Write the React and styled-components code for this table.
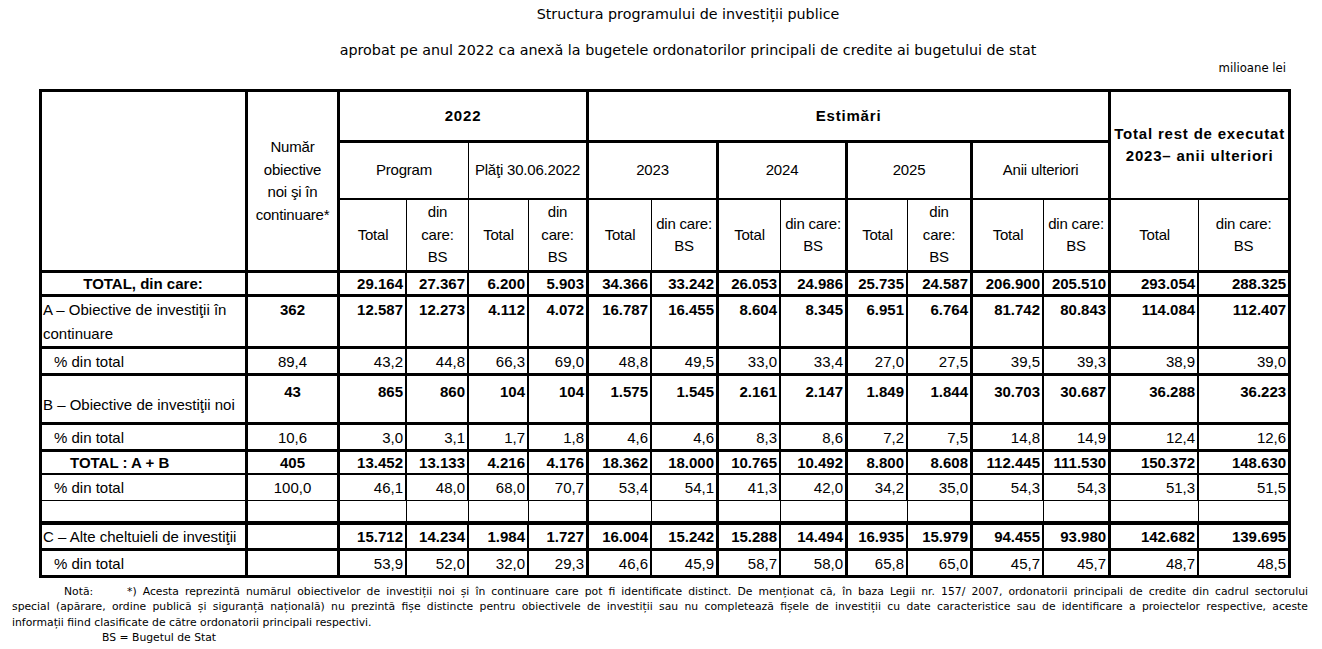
import React from 'react'
import styled, { createGlobalStyle } from 'styled-components'

const GlobalStyle = createGlobalStyle`
  html, body { margin: 0; padding: 0; background: #fff; color: #000; }
`

const Page = styled.div`
  width: 1322px;
  height: 649px;
  overflow: hidden;
`

const Title = styled.div`
  font-family: "DejaVu Sans", sans-serif;
  font-size: 14.3px;
  line-height: 18px;
  text-align: center;
  padding-left: 54px;
  margin-top: ${p => p.$mt}px;
  white-space: nowrap;
`

const Unit = styled.div`
  font-family: "Liberation Sans Narrow", "DejaVu Sans Condensed", sans-serif;
  font-size: 13px;
  line-height: 16px;
  text-align: right;
  padding-right: 36px;
  margin-top: 1px;
`

const Table = styled.table`
  margin: 13px 0 0 39px;
  width: 1252px;
  table-layout: fixed;
  border-collapse: separate;
  border-spacing: 0;
  border-top: 3px solid #000;
  border-left: 3px solid #000;
  font-family: "Liberation Sans", Arial, sans-serif;
  font-size: 15px;
`

const Row = styled.tr`
  height: ${p => p.$h}px;
`

const Head = styled.td`
  box-sizing: border-box;
  border-right: ${p => p.$r}px solid #000;
  border-bottom: ${p => p.$b}px solid #000;
  padding: 0 2px;
  text-align: center;
  vertical-align: middle;
  line-height: 22.5px;
  font-weight: ${p => (p.$bold ? 700 : 400)};
  letter-spacing: ${p => (p.$bold ? '0.8px' : '-0.2px')};
  white-space: nowrap;
  overflow: hidden;
`

const Cell = styled.td`
  box-sizing: border-box;
  border-right: ${p => p.$r}px solid #000;
  border-bottom: ${p => p.$b}px solid #000;
  padding: ${p => p.$pt || 0}px 2px 0 ${p => p.$pl ?? 2}px;
  text-align: ${p => p.$align || 'right'};
  vertical-align: ${p => p.$valign || 'middle'};
  font-weight: ${p => (p.$bold ? 700 : 400)};
  line-height: ${p => p.$lh || 21}px;
  white-space: nowrap;
  overflow: hidden;
`

const Notes = styled.div`
  margin-top: 6px;
  font-family: "DejaVu Sans", sans-serif;
  font-size: 10.8px;
  line-height: 15.3px;
  padding-right: 14px;
`

const NoteLine = styled.div`
  padding-left: ${p => p.$indent}px;
  white-space: nowrap;
  text-align: ${p => (p.$justify ? 'justify' : 'left')};
  text-align-last: ${p => (p.$justify ? 'justify' : 'left')};
`

const NoteTag = styled.span`
  display: inline-block;
  width: 63px;
`

const widths = [206, 92, 67, 62, 60, 60, 63, 67, 62, 67, 60, 65, 71, 67, 88, 92]
const bodyRight = [3, 3, 2, 2, 2, 3, 2, 3, 2, 3, 2, 3, 2, 3, 2, 3]
const thinRight = [3, 3, 1, 1, 1, 3, 1, 3, 1, 3, 1, 3, 1, 3, 1, 3]

const pairs = [
  { name: 'Program', r: 1, bs: ['din', 'care:', 'BS'] },
  { name: 'Plăţi 30.06.2022', r: 3, bs: ['din', 'care:', 'BS'] },
  { name: '2023', r: 3, bs: ['din care:', 'BS'] },
  { name: '2024', r: 3, bs: ['din care:', 'BS'] },
  { name: '2025', r: 3, bs: ['din', 'care:', 'BS'] },
  { name: 'Anii ulteriori', r: 3, bs: ['din care:', 'BS'] },
]

const rows = [
  {
    label: ['TOTAL, din care:'], labelAlign: 'center', bold: true, h: 24, b: 3, n: '',
    vals: ['29.164', '27.367', '6.200', '5.903', '34.366', '33.242', '26.053', '24.986', '25.735', '24.587', '206.900', '205.510', '293.054', '288.325'],
  },
  {
    label: ['A – Obiective de investiţii în', 'continuare'], bold: true, h: 52, b: 3, n: '362',
    valign: 'top', labelValign: 'top', lh: 24, pt: 1, labelPt: 1,
    vals: ['12.587', '12.273', '4.112', '4.072', '16.787', '16.455', '8.604', '8.345', '6.951', '6.764', '81.742', '80.843', '114.084', '112.407'],
  },
  {
    label: ['% din total'], pl: 12, h: 27, b: 3, n: '89,4',
    vals: ['43,2', '44,8', '66,3', '69,0', '48,8', '49,5', '33,0', '33,4', '27,0', '27,5', '39,5', '39,3', '38,9', '39,0'],
  },
  {
    label: ['B – Obiective de investiţii noi'], bold: true, h: 49, b: 3, n: '43',
    valign: 'top', pt: 5, labelPt: 10,
    vals: ['865', '860', '104', '104', '1.575', '1.545', '2.161', '2.147', '1.849', '1.844', '30.703', '30.687', '36.288', '36.223'],
  },
  {
    label: ['% din total'], pl: 12, h: 27, b: 3, n: '10,6',
    vals: ['3,0', '3,1', '1,7', '1,8', '4,6', '4,6', '8,3', '8,6', '7,2', '7,5', '14,8', '14,9', '12,4', '12,6'],
  },
  {
    label: ['TOTAL : A + B'], labelBold: true, pl: 28, bold: true, h: 23, b: 2, n: '405',
    vals: ['13.452', '13.133', '4.216', '4.176', '18.362', '18.000', '10.765', '10.492', '8.800', '8.608', '112.445', '111.530', '150.372', '148.630'],
  },
  {
    label: ['% din total'], pl: 12, h: 26, b: 1, n: '100,0',
    vals: ['46,1', '48,0', '68,0', '70,7', '53,4', '54,1', '41,3', '42,0', '34,2', '35,0', '54,3', '54,3', '51,3', '51,5'],
  },
  { label: [''], h: 24, b: 4, n: '', thin: true, vals: Array(14).fill('') },
  {
    label: ['C – Alte cheltuieli de investiţii'], bold: true, h: 26, b: 3, n: '',
    vals: ['15.712', '14.234', '1.984', '1.727', '16.004', '15.242', '15.288', '14.494', '16.935', '15.979', '94.455', '93.980', '142.682', '139.695'],
  },
  {
    label: ['% din total'], pl: 12, h: 27, b: 3, n: '',
    vals: ['53,9', '52,0', '32,0', '29,3', '46,6', '45,9', '58,7', '58,0', '65,8', '65,0', '45,7', '45,7', '48,7', '48,5'],
  },
]

const Lines = ({ items }) =>
  items.map((t, i) => (
    <React.Fragment key={i}>
      {i > 0 && <br />}
      {t}
    </React.Fragment>
  ))

const BodyRow = ({ row }) => {
  const right = row.thin ? thinRight : bodyRight
  return (
    <Row $h={row.h}>
      <Cell
        $r={right[0]}
        $b={row.b}
        $align={row.labelAlign || 'left'}
        $valign={row.labelValign || 'middle'}
        $bold={row.labelAlign === 'center' || row.labelBold}
        $pl={row.pl ?? 1}
        $pt={row.labelPt}
        $lh={row.lh}
      >
        <Lines items={row.label} />
      </Cell>
      <Cell $r={right[1]} $b={row.b} $align="center" $valign={row.valign} $pt={row.pt} $bold={row.bold} $lh={row.lh}>
        {row.n}
      </Cell>
      {row.vals.map((v, i) => (
        <Cell key={i} $r={right[i + 2]} $b={row.b} $valign={row.valign} $pt={row.pt} $bold={row.bold} $lh={row.lh}>
          {v}
        </Cell>
      ))}
    </Row>
  )
}

export default function App() {
  return (
    <Page>
      <GlobalStyle />
      <Title $mt={5}>Structura programului de investiții publice</Title>
      <Title $mt={18}>
        aprobat pe anul 2022 ca anexă la bugetele ordonatorilor principali de credite ai bugetului de stat
      </Title>
      <Unit>milioane lei</Unit>

      <Table>
        <colgroup>
          {widths.map((w, i) => (
            <col key={i} style={{ width: w }} />
          ))}
        </colgroup>
        <tbody>
          <Row $h={51}>
            <Head rowSpan={3} $r={3} $b={3} />
            <Head rowSpan={3} $r={3} $b={3}>
              <Lines items={['Număr', 'obiective', 'noi şi în', 'continuare*']} />
            </Head>
            <Head colSpan={4} $r={3} $b={3} $bold>2022</Head>
            <Head colSpan={8} $r={3} $b={3} $bold>Estimări</Head>
            <Head colSpan={2} rowSpan={2} $r={3} $b={2} $bold>
              <Lines items={['Total rest de executat', '2023– anii ulteriori']} />
            </Head>
          </Row>
          <Row $h={57}>
            {pairs.map(p => (
              <Head key={p.name} colSpan={2} $r={p.r} $b={2}>{p.name}</Head>
            ))}
          </Row>
          <Row $h={73}>
            {pairs.map(p => (
              <React.Fragment key={p.name}>
                <Head $r={1} $b={3}>Total</Head>
                <Head $r={p.r} $b={3}><Lines items={p.bs} /></Head>
              </React.Fragment>
            ))}
            <Head $r={1} $b={3}>Total</Head>
            <Head $r={3} $b={3}><Lines items={['din care:', 'BS']} /></Head>
          </Row>
          {rows.map((r, i) => (
            <BodyRow key={i} row={r} />
          ))}
        </tbody>
      </Table>

      <Notes>
        <NoteLine $indent={64} $justify>
          <NoteTag>Notă:</NoteTag>*) Acesta reprezintă numărul obiectivelor de investiții noi și în continuare care pot fi identificate distinct. De menționat că, în baza Legii nr. 157/ 2007, ordonatorii principali de credite din cadrul sectorului
        </NoteLine>
        <NoteLine $indent={12} $justify>
          special (apărare, ordine publică și siguranță națională) nu prezintă fișe distincte pentru obiectivele de investiții sau nu completează fișele de investiții cu date caracteristice sau de identificare a proiectelor respective, aceste
        </NoteLine>
        <NoteLine $indent={12}>
          informații fiind clasificate de către ordonatorii principali respectivi.
        </NoteLine>
        <NoteLine $indent={102}>BS = Bugetul de Stat</NoteLine>
      </Notes>
    </Page>
  )
}
